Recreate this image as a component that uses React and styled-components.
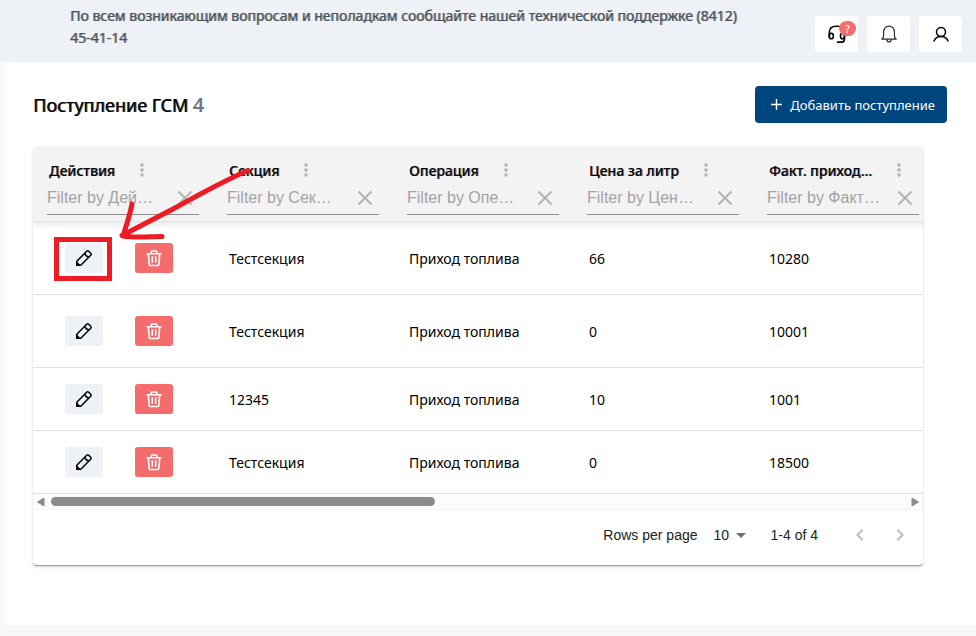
import React from 'react'
import styled, { createGlobalStyle } from 'styled-components'

const GlobalStyle = createGlobalStyle`
  *{ box-sizing: border-box; }
  body{
    margin: 0;
    background: #f8f8fb;
    color: black;
    font-family: "Noto Sans", "Open Sans", sans-serif;
    font-size: 14px;
  }
  button, input, select{
    font: inherit;
    color: inherit;
    margin: 0;
    padding: 0;
    border: none;
    background: none;
  }
  button{ cursor: pointer; }
  svg{ display: block; }
`

const TopBar = styled.header`
  display: flex;
  justify-content: space-between;
  align-items: flex-start;
  min-height: 62px;
  padding: 5px 14px 10px 70px;
  background: #eef1f6;
`

const SupportText = styled.p`
  flex: 1;
  max-width: 680px;
  margin: 0;
  color: #4b5157;
  line-height: 22px;
  text-shadow: 1px 0 rgba(75,81,87,0.6);
`

const TopButtons = styled.div`
  display: flex;
  gap: 9px;
  padding-top: 11px;
`

const TopButton = styled.button`
  position: relative;
  display: flex;
  justify-content: center;
  align-items: center;
  width: 43px;
  height: 36px;
  border-radius: 4px;
  background: white;
`

const Badge = styled.span`
  position: absolute;
  top: 5px;
  right: 2px;
  width: 17px;
  height: 15px;
  border-radius: 8px;
  background: #f56c6c;
  color: white;
  font-size: 11px;
  font-weight: 500;
  line-height: 15px;
  text-align: center;
`

const Page = styled.main`
  padding: 24px 29px 59px 33px;
  background: linear-gradient(to right, #fafafa, white 14px);
`

const PageHead = styled.div`
  display: flex;
  justify-content: space-between;
  align-items: center;
  margin-bottom: 24px;
`

const PageTitle = styled.h1`
  margin: 0;
  font-size: 18px;
  font-weight: 400;
  line-height: 24px;
  text-shadow: 1px 0 rgba(0,0,0,0.7);
`

const Count = styled.span`
  color: #73768a;
  font-size: 20px;
  font-weight: 600;
  text-shadow: none;
`

const AddButton = styled.button`
  display: flex;
  align-items: center;
  gap: 8px;
  height: 37px;
  padding: 0 12px 0 16px;
  border-radius: 4px;
  background: #00457e;
  color: white;
  font-size: 13px;
`

const Card = styled.section`
  position: relative;
  margin-right: 24px;
  border-bottom: 1px solid #9c9f9e;
  border-radius: 4px;
  background: white;
  box-shadow: 0 1px 3px rgba(0,0,0,0.18);
`

const TableArea = styled.div`
  overflow: hidden;
  border-radius: 4px 4px 0 0;
`

const Table = styled.table`
  width: 100%;
  min-width: 900px;
  table-layout: fixed;
  border-spacing: 0;
`

const HeadCell = styled.th`
  height: 75px;
  padding: 12px 14px 6px;
  border-bottom: 1px solid #e0e0e0;
  background: #f3f3f3;
  text-align: left;
  font-weight: 500;
  vertical-align: top;
`

const TableHead = styled.thead`
  position: relative;
  box-shadow: 0 4px 6px rgba(0,0,0,0.07);
`

const HeadLabel = styled.div`
  display: flex;
  align-items: center;
  height: 22px;
  padding-left: 2px;
  white-space: nowrap;
  text-shadow: 1px 0 rgba(0,0,0,0.4);
`

const MenuButton = styled.button`
  margin-left: 24px;
  color: #b4b4b4;
`

const Filter = styled.div`
  display: flex;
  align-items: center;
  height: 34px;
  padding-right: 4px;
  border-bottom: 1px solid #8d8d8d;
`

const FilterInput = styled.input`
  flex: 1;
  min-width: 0;
  font-family: "Liberation Sans", Arial, sans-serif;
  font-size: 16px;
  font-weight: 400;
  outline: none;

  &::placeholder{
    color: #a3a3a3;
    opacity: 1;
  }
`

const ClearButton = styled.button`
  color: #b3b3b3;
`

const Cell = styled.td`
  height: ${({ $tall }) => ($tall ? '73px' : '63px')};
  padding: 0 16px;
  border-bottom: 1px solid #e0e0e0;
`

const Actions = styled.div`
  display: flex;
  gap: 32px;
  padding-left: 16px;
`

const ActionButton = styled.button`
  display: flex;
  justify-content: center;
  align-items: center;
  width: 38px;
  height: 30px;
  border-radius: 3px;
  background: ${({ $danger }) => ($danger ? '#f56c6c' : '#eef1f6')};
  color: ${({ $danger }) => ($danger ? 'white' : 'black')};
`

const ScrollBar = styled.div`
  display: flex;
  align-items: center;
  gap: 6px;
  height: 16px;
  padding: 0 4px;
  border-bottom: 1px solid #f5f5f5;
  background: #fcfcfc;
  color: #8b8b8b;
`

const ScrollTrack = styled.div`
  flex: 1;
`

const ScrollThumb = styled.div`
  width: 45%;
  height: 9px;
  border-radius: 5px;
  background: #8b8b8b;
`

const Pagination = styled.footer`
  display: flex;
  justify-content: flex-end;
  align-items: center;
  height: 55px;
  padding: 0 11px 5px;
  color: #222;
  font-family: "Liberation Sans", Arial, sans-serif;
  font-size: 14px;
`

const RowsLabel = styled.label`
  display: flex;
  align-items: center;
  gap: 16px;
`

const SelectBox = styled.span`
  display: flex;
  align-items: center;
  gap: 5px;
  color: #6f6f6f;
`

const RowsSelect = styled.select`
  width: 17px;
  appearance: none;
  color: #222;
`

const Range = styled.span`
  margin: 0 30px 0 25px;
`

const PageButtons = styled.div`
  display: flex;
  gap: 16px;
  color: #bdbdbd;
`

// drawn over the first row to point at the edit button
const Pointer = styled.svg`
  position: absolute;
  top: 0;
  left: 0;
  pointer-events: none;
`

const HeadsetIcon = () => (
  <svg width="18" height="18" viewBox="0 0 18 18" fill="none" stroke="black" strokeWidth="1.600" strokeLinecap="round" strokeLinejoin="round">
    <path d="M1.300 12V7.500C1.300 3.500 4 1.200 8 1.200h1.500c4 0 7 2.300 7 6.300v6.500c0 2-1 3.100-3 3.100H9.500" />
    <path d="M1.300 10.500c0-1.600.7-2.300 2-2.300s2 .7 2 2.300v1c0 1.600-.7 2.300-2 2.300s-2-.7-2-2.300z" />
    <path d="M16.500 10.500c0-1.600-.7-2.300-2-2.300s-2 .7-2 2.300v1c0 1.600.7 2.300 2 2.300s2-.7 2-2.300z" />
  </svg>
)

const BellIcon = () => (
  <svg width="18" height="18" viewBox="0 0 18 18" fill="none" stroke="#2b2b2b" strokeWidth="1.200" strokeLinejoin="round">
    <path d="M1.800 14.200h14.400c-1.200-1-1.800-2.300-1.800-4V7C14.400 3.700 12.200 1.200 9 1.200S3.600 3.700 3.600 7v3.200c0 1.700-.6 3-1.800 4z" />
    <path d="M6.800 14.400c.1 1.700 1 2.600 2.200 2.600s2.100-.9 2.200-2.600" />
  </svg>
)

const UserIcon = () => (
  <svg width="18" height="18" viewBox="0 0 18 18" fill="none" stroke="black" strokeWidth="1.500" strokeLinecap="round">
    <circle cx="9" cy="7" r="4.500" />
    <path d="M2 16c1.200-3 3.800-4.500 7-4.500s5.800 1.500 7 4.500" />
  </svg>
)

const PlusIcon = () => (
  <svg width="11" height="11" viewBox="0 0 11 11" stroke="currentColor" strokeWidth="1.400">
    <path d="M5.500 0v11M0 5.500h11" />
  </svg>
)

const DotsIcon = () => (
  <svg width="6" height="16" viewBox="0 0 6 16" fill="currentColor">
    <circle cx="3" cy="3" r="1.800" />
    <circle cx="3" cy="8" r="1.800" />
    <circle cx="3" cy="13" r="1.800" />
  </svg>
)

const CloseIcon = () => (
  <svg width="20" height="20" viewBox="0 0 20 20" stroke="currentColor" strokeWidth="2">
    <path d="M3.500 3.500l13 13M16.500 3.500l-13 13" />
  </svg>
)

const PencilIcon = () => (
  <svg width="18" height="18" viewBox="0 0 18 18" fill="none" stroke="currentColor" strokeWidth="1.500" strokeLinejoin="round">
    <path d="M1.800 12.200L11.700 2.300c.6-.6 1.400-.6 2 0l2 2c.6.6.6 1.400 0 2L5.800 16.200H1.800z" />
    <path d="M9.900 4.100c.4 2.200 1.800 3.600 4 4" />
    <path d="M1.800 13.500l2.700 2.700H1.800z" fill="currentColor" />
  </svg>
)

const TrashIcon = () => (
  <svg width="18" height="18" viewBox="0 0 18 18" fill="none" stroke="currentColor" strokeWidth="1.600" strokeLinejoin="round">
    <path d="M1.500 4.800h15M6.200 4.500V2.800c0-.5.300-.8.800-.8h4c.5 0 .8.300.8.800v1.700M3.300 5l.9 10.500c.1.600.4 1 1 1h7.600c.6 0 .9-.4 1-1L14.700 5" />
    <path d="M7.300 7.200v6.600M10.700 7.200v6.600" />
  </svg>
)

const CaretIcon = () => (
  <svg width="10" height="5" viewBox="0 0 10 5" fill="currentColor">
    <path d="M0 0h10L5 5z" />
  </svg>
)

const ScrollArrow = ({ right }) => (
  <svg width="8" height="10" viewBox="0 0 8 10" fill="currentColor">
    <path d={right ? 'M1 1L7.500 5L1 9z' : 'M7 1L0.500 5L7 9z'} stroke="currentColor" strokeWidth="1" strokeLinejoin="round" />
  </svg>
)

const Chevron = ({ right }) => (
  <svg width="24" height="24" viewBox="0 0 24 24" fill="none" stroke="currentColor" strokeWidth="2">
    <path d={right ? 'M9.300 6.700l5.300 5.300-5.300 5.300' : 'M14.700 6.700L9.400 12l5.300 5.300'} />
  </svg>
)

const columns = [
  { title: 'Действия', filter: 'Filter by Дей…' },
  { title: 'Секция', filter: 'Filter by Сек…' },
  { title: 'Операция', filter: 'Filter by Опе…' },
  { title: 'Цена за литр', filter: 'Filter by Цен…' },
  { title: 'Факт. приход...', filter: 'Filter by Факт…' },
]

const rows = [
  { values: ['Тестсекция', 'Приход топлива', '66', '10280'], tall: true },
  { values: ['Тестсекция', 'Приход топлива', '0', '10001'], tall: true },
  { values: ['12345', 'Приход топлива', '10', '1001'] },
  { values: ['Тестсекция', 'Приход топлива', '0', '18500'] },
]

const ColumnHead = ({ title, filter }) => (
  <HeadCell scope="col">
    <HeadLabel>
      {title}
      <MenuButton type="button" aria-label="Меню"><DotsIcon /></MenuButton>
    </HeadLabel>
    <Filter>
      <FilterInput type="text" placeholder={filter} aria-label={title} />
      <ClearButton type="button" aria-label="Очистить"><CloseIcon /></ClearButton>
    </Filter>
  </HeadCell>
)

const Row = ({ values, tall }) => (
  <tr>
    <Cell $tall={tall}>
      <Actions>
        <ActionButton type="button" aria-label="Изменить"><PencilIcon /></ActionButton>
        <ActionButton type="button" aria-label="Удалить" $danger><TrashIcon /></ActionButton>
      </Actions>
    </Cell>
    {values.map((value, i) => <Cell key={i} $tall={tall}>{value}</Cell>)}
  </tr>
)

const App = () => (
  <>
    <GlobalStyle />
    <TopBar>
      <SupportText>
        По всем возникающим вопросам и неполадкам сообщайте нашей технической поддержке (8412) 45-41-14
      </SupportText>
      <TopButtons>
        <TopButton type="button" aria-label="Поддержка"><HeadsetIcon /><Badge>?</Badge></TopButton>
        <TopButton type="button" aria-label="Уведомления"><BellIcon /></TopButton>
        <TopButton type="button" aria-label="Профиль"><UserIcon /></TopButton>
      </TopButtons>
    </TopBar>
    <Page>
      <PageHead>
        <PageTitle>Поступление ГСМ <Count>4</Count></PageTitle>
        <AddButton type="button"><PlusIcon />Добавить поступление</AddButton>
      </PageHead>
      <Card>
        <TableArea>
          <Table>
            <TableHead>
              <tr>{columns.map(c => <ColumnHead key={c.title} {...c} />)}</tr>
            </TableHead>
            <tbody>
              {rows.map((r, i) => <Row key={i} {...r} />)}
            </tbody>
          </Table>
        </TableArea>
        <ScrollBar>
          <ScrollArrow />
          <ScrollTrack><ScrollThumb /></ScrollTrack>
          <ScrollArrow right />
        </ScrollBar>
        <Pagination>
          <RowsLabel>
            Rows per page
            <SelectBox>
              <RowsSelect defaultValue="10"><option>10</option></RowsSelect>
              <CaretIcon />
            </SelectBox>
          </RowsLabel>
          <Range>1-4 of 4</Range>
          <PageButtons>
            <button type="button" aria-label="Previous page"><Chevron /></button>
            <button type="button" aria-label="Next page"><Chevron right /></button>
          </PageButtons>
        </Pagination>
        <Pointer width="230" height="140" viewBox="0 0 230 140" fill="none" stroke="#ed1c24" strokeWidth="5" strokeLinecap="round" strokeLinejoin="round">
          <rect x="23.500" y="92.500" width="53" height="39" strokeLinejoin="miter" />
          <path d="M215 23.500C190 34 160 51 140 62L89 88.500M99 57c-2 11-6 22-9 32c12 2 26 .5 39 .5" />
        </Pointer>
      </Card>
    </Page>
  </>
)

export default App
